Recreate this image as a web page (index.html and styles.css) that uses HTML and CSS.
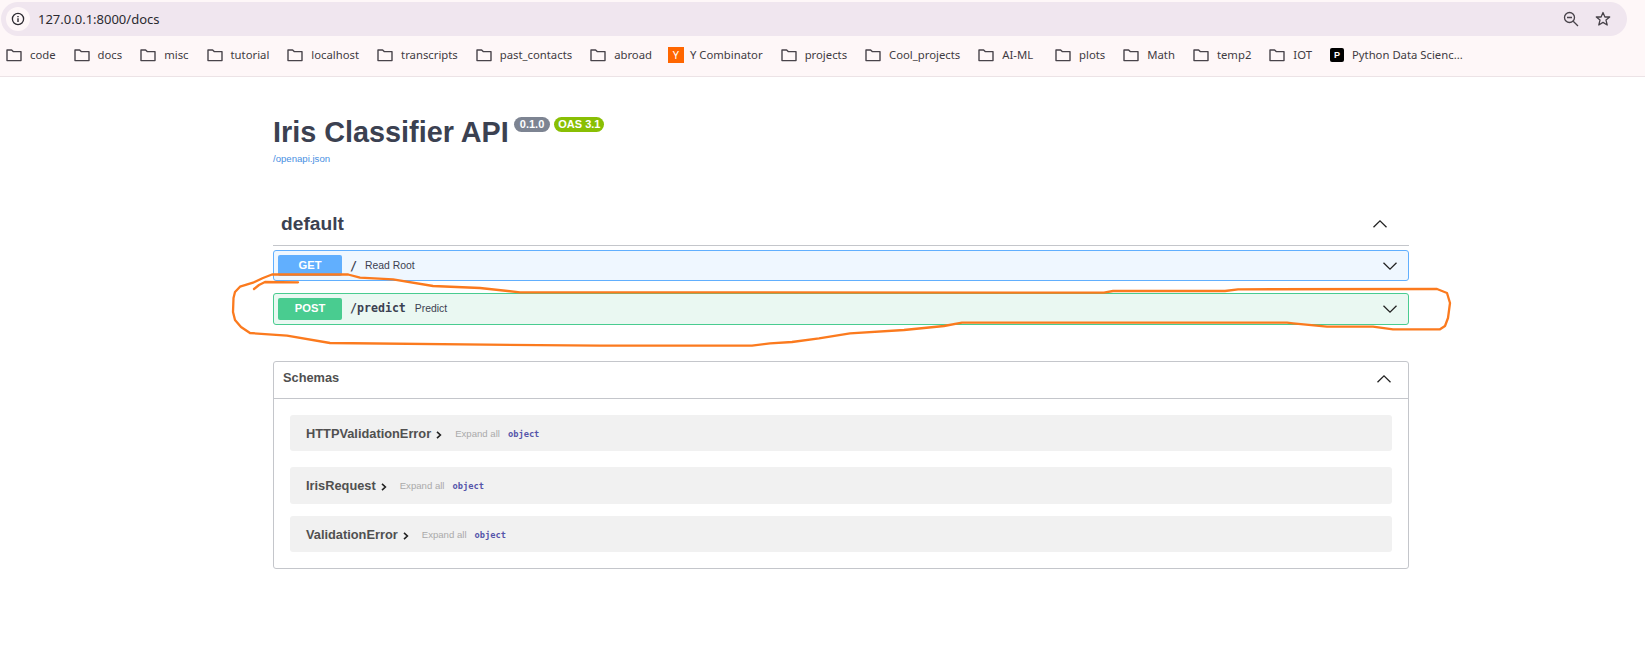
FILE: index.html
```html
<!DOCTYPE html>
<html lang="en">
<head>
  <meta charset="UTF-8">
  <title>Iris Classifier API - Swagger UI</title>
  <link rel="stylesheet" href="styles.css">
</head>
<body>
  <svg class="defs" width="0" height="0">
    <symbol id="folder" viewBox="0 0 16 16">
      <path d="M1 3h4.6l1.6 1.6H15v9H1z" fill="none" stroke="#48434a" stroke-width="1.4" stroke-linejoin="round"/>
    </symbol>
    <symbol id="chev-up" viewBox="0 0 16 10">
      <path d="M1.500 8.200 8 1.800l6.500 6.400" fill="none" stroke="#222" stroke-width="1.300"/>
    </symbol>
    <symbol id="chev-down" viewBox="0 0 16 10">
      <path d="M1.500 1.800 8 8.200l6.500-6.400" fill="none" stroke="#222" stroke-width="1.300"/>
    </symbol>
    <symbol id="chev-right" viewBox="0 0 6 8">
      <path d="M1 .8 4.400 4 1 7.200" fill="none" stroke="#222" stroke-width="1.600"/>
    </symbol>
  </svg>

  <header class="toolbar">
    <div class="address">
      <span class="site-info">
        <svg width="14" height="14" viewBox="0 0 14 14">
          <circle cx="7" cy="7" r="5.600" fill="none" stroke="#2c2a30" stroke-width="1.300"/>
          <path d="M7 6.200v3.800M7 4v1.300" stroke="#2c2a30" stroke-width="1.400"/>
        </svg>
      </span>
      <span class="url">127.0.0.1:8000/docs</span>
      <span class="address-actions">
        <svg width="16" height="16" viewBox="0 0 16 16">
          <circle cx="6.500" cy="6.500" r="5" fill="none" stroke="#48434a" stroke-width="1.300"/>
          <path d="M4 6.500h5M10.200 10.200 15 15" stroke="#48434a" stroke-width="1.300"/>
        </svg>
        <svg width="16" height="16" viewBox="0 0 16 16">
          <path d="M8 1.500 9.900 6h4.800l-3.700 3.100 1.200 4.900L8 11.400 3.800 14 5 9.100 1.300 6h4.800z" fill="none" stroke="#48434a" stroke-width="1.300" stroke-linejoin="round"/>
        </svg>
      </span>
    </div>
    <nav class="bookmarks">
      <a class="bookmark"><svg class="folder"><use href="#folder"/></svg>code</a>
      <a class="bookmark"><svg class="folder"><use href="#folder"/></svg>docs</a>
      <a class="bookmark"><svg class="folder"><use href="#folder"/></svg>misc</a>
      <a class="bookmark"><svg class="folder"><use href="#folder"/></svg>tutorial</a>
      <a class="bookmark"><svg class="folder"><use href="#folder"/></svg>localhost</a>
      <a class="bookmark"><svg class="folder"><use href="#folder"/></svg>transcripts</a>
      <a class="bookmark"><svg class="folder"><use href="#folder"/></svg>past_contacts</a>
      <a class="bookmark"><svg class="folder"><use href="#folder"/></svg>abroad</a>
      <a class="bookmark bookmark-yc"><span class="favicon yc">Y</span>Y Combinator</a>
      <a class="bookmark"><svg class="folder"><use href="#folder"/></svg>projects</a>
      <a class="bookmark"><svg class="folder"><use href="#folder"/></svg>Cool_projects</a>
      <a class="bookmark"><svg class="folder"><use href="#folder"/></svg>AI-ML</a>
      <a class="bookmark bookmark-plots"><svg class="folder"><use href="#folder"/></svg>plots</a>
      <a class="bookmark"><svg class="folder"><use href="#folder"/></svg>Math</a>
      <a class="bookmark"><svg class="folder"><use href="#folder"/></svg>temp2</a>
      <a class="bookmark"><svg class="folder"><use href="#folder"/></svg>IOT</a>
      <a class="bookmark"><span class="favicon pds">P</span>Python Data Scienc...</a>
    </nav>
  </header>

  <main class="docs">
    <div class="info">
      <div class="title-row">
        <h1 class="title">Iris Classifier API</h1>
        <span class="badge version">0.1.0</span>
        <span class="badge oas">OAS 3.1</span>
      </div>
      <a class="spec-link">/openapi.json</a>
    </div>

    <div class="tag-header">
      <h2 class="tag-name">default</h2>
      <svg class="chev tag-chev"><use href="#chev-up"/></svg>
    </div>

    <div class="opblock opblock-get">
      <span class="method">GET</span>
      <span class="path">/</span>
      <span class="summary">Read Root</span>
      <svg class="chev"><use href="#chev-down"/></svg>
    </div>
    <div class="opblock opblock-post">
      <span class="method">POST</span>
      <span class="path">/predict</span>
      <span class="summary">Predict</span>
      <svg class="chev"><use href="#chev-down"/></svg>
    </div>

    <section class="schemas">
      <div class="schemas-header">
        <h3 class="schemas-title">Schemas</h3>
        <svg class="chev"><use href="#chev-up"/></svg>
      </div>
      <div class="schemas-body">
        <div class="model">
          <span class="model-name">HTTPValidationError</span>
          <svg class="model-chev"><use href="#chev-right"/></svg>
          <span class="expand">Expand all</span>
          <span class="type">object</span>
        </div>
        <div class="model model-tall">
          <span class="model-name">IrisRequest</span>
          <svg class="model-chev"><use href="#chev-right"/></svg>
          <span class="expand">Expand all</span>
          <span class="type">object</span>
        </div>
        <div class="model model-tight">
          <span class="model-name">ValidationError</span>
          <svg class="model-chev"><use href="#chev-right"/></svg>
          <span class="expand">Expand all</span>
          <span class="type">object</span>
        </div>
      </div>
    </section>
  </main>

  <!-- hand drawn marker around the POST row -->
  <svg class="marker" width="1645" height="657" viewBox="0 0 1645 657">
    <path d="M254 289 L259 285 L265 282 L298 282.300"/>
    <path d="M348 274.500 L272 274.500 L263 278 L253 282.700 L240 286.700 L235 292 L233.500 298 L233 312 L235 320 L241 327 L250 333 L287 335.700 L330 343 L600 345.700 L752 345.700 L770 343.300 L792 342 L819 338.300 L850 333.300 L904 330 L944 326 L962 322.700 L1287 322.700 L1293 323.300 L1327 326.700 L1373 326.700 L1393 329.300 L1440 329.300 L1445 326 L1448 318 L1450 303 L1447 293 L1437 289 L1238 289.300 L1225 291 L1113 291 L1104 292.700 L520 292.300 L480 288 L433 286 L393 279.300 L360 277.700 L348 274.500"/>
  </svg>
</body>
</html>
```

FILE: styles.css
```css
* {
  box-sizing: border-box;
}

html, body {
  margin: 0;
  height: 657px;
  overflow: hidden;
}

body {
  position: relative;
  background: #fff;
  color: #3b4151;
  font-family: "Liberation Sans", sans-serif;
}

.defs {
  display: none;
}

/* browser chrome */
.toolbar {
  height: 77px;
  padding: 2px 18px 0 1px;
  border-bottom: 1px solid #ece3e6;
  background: #fef7f8;
}

.address {
  display: flex;
  align-items: center;
  height: 34px;
  padding: 0 16px 0 5px;
  border-radius: 17px;
  background: #f0e6ef;
}

.site-info {
  display: flex;
  align-items: center;
  justify-content: center;
  width: 24px;
  height: 24px;
  border-radius: 50%;
  background: #fef7f8;
}

.url {
  margin-left: 8px;
  font: 13px "Noto Sans", sans-serif;
  color: #2b2a30;
}

.address-actions {
  display: flex;
  align-items: center;
  gap: 16px;
  margin-left: auto;
}

.bookmarks {
  display: flex;
  align-items: center;
  gap: 18px;
  height: 37px;
  padding-left: 5px;
}

.bookmark {
  display: flex;
  align-items: center;
  gap: 8px;
  font: 11.300px "Noto Sans", sans-serif;
  color: #3f3b42;
  white-space: nowrap;
}

.bookmark-yc {
  gap: 6px;
  margin-left: -2px;
}

.bookmark-plots {
  margin-left: 4px;
}

.folder {
  width: 16px;
  height: 16px;
}

.favicon {
  width: 16px;
  height: 16px;
  display: flex;
  align-items: center;
  justify-content: center;
  color: #fff;
  font-size: 11px;
}

.yc {
  background: #f60;
}

.pds {
  width: 14px;
  height: 14px;
  border-radius: 2px;
  background: #000;
  font: bold 9px "Liberation Sans", sans-serif;
}

/* swagger page */
.docs {
  width: 1136px;
  margin-left: 273px;
}

.info {
  padding-top: 37px;
}

.title-row {
  display: flex;
  align-items: flex-start;
  gap: 4px;
  height: 36px;
}

.title {
  margin: 0 1px 0 0;
  font-size: 28.800px;
  line-height: 36px;
  font-weight: bold;
}

.badge {
  margin-top: 3px;
  padding: 0 6px;
  height: 15px;
  border-radius: 8px;
  color: #fff;
  font-size: 11px;
  font-weight: bold;
  line-height: 15px;
}

.version {
  background: #7d8492;
}

.oas {
  padding: 0 4px;
  background: #89bf04;
}

.spec-link {
  display: block;
  margin-top: 3px;
  font-size: 9.600px;
  line-height: 12px;
  color: #4990e2;
}

.tag-header {
  display: flex;
  align-items: center;
  justify-content: space-between;
  height: 34px;
  margin-top: 47px;
  padding: 0 21px 10px 8px;
  border-bottom: 1px solid #c4c6cb;
}

.tag-name {
  margin: 1px 0 0;
  font-size: 19.200px;
  line-height: 24px;
  font-weight: bold;
}

.chev {
  width: 16px;
  height: 10px;
}

.opblock {
  display: flex;
  align-items: center;
  height: 31px;
  margin-top: 4px;
  padding: 0 10px 0 4px;
  border: 1px solid;
  border-radius: 3px;
}

.opblock .chev {
  margin-left: auto;
}

.opblock-get {
  border-color: #61affe;
  background: #eff7ff;
}

.opblock-post {
  height: 32px;
  margin-top: 12px;
  padding-bottom: 2px;
  border-color: #49cc90;
  background: #eaf8f2;
}

.opblock-post .chev {
  margin-top: 1px;
}

.method {
  width: 64px;
  height: 21px;
  border-radius: 2px;
  color: #fff;
  font-size: 11.200px;
  font-weight: bold;
  line-height: 21px;
  text-align: center;
}

.opblock-get .method {
  background: #61affe;
}

.opblock-post .method {
  height: 22px;
  margin-top: 2px;
  line-height: 20px;
  background: #49cc90;
}

.path {
  margin-left: 8px;
  font: bold 11.600px "DejaVu Sans Mono", monospace;
}

.summary {
  margin-left: 9px;
  font-size: 10.400px;
}

.opblock-get .summary {
  margin-left: 8px;
}

.schemas {
  height: 208px;
  margin-top: 36px;
  border: 1px solid #c4c6cb;
  border-radius: 3px;
}

.schemas-header {
  display: flex;
  align-items: center;
  justify-content: space-between;
  height: 37px;
  padding: 0 16px 2px 9px;
  border-bottom: 1px solid #c4c6cb;
}

.schemas-title {
  margin: 0 0 4px;
  font-size: 12.800px;
  font-weight: bold;
  color: #505050;
}

.schemas-body {
  padding: 16px 16px 0;
}

.model {
  display: flex;
  align-items: center;
  height: 36px;
  padding-left: 16px;
  border-radius: 3px;
  background: #f1f1f1;
}

.model-tall {
  height: 37px;
  margin-top: 16px;
}

.model-tight {
  margin-top: 12px;
}

.model-name {
  font-size: 12.800px;
  font-weight: bold;
  color: #505050;
}

.model-chev {
  width: 6px;
  height: 8px;
  margin: 3px 0 0 5px;
}

.expand {
  margin-left: 13px;
  font-size: 9.600px;
  color: #aaa;
}

.type {
  margin: 1px 0 0 8px;
  font: bold 8.700px "DejaVu Sans Mono", monospace;
  color: #55a;
}

.marker {
  position: absolute;
  top: 0;
  left: 0;
  pointer-events: none;
}

.marker path {
  fill: none;
  stroke: #fb7a1e;
  stroke-width: 2.300;
  stroke-linejoin: round;
  stroke-linecap: round;
}
```
